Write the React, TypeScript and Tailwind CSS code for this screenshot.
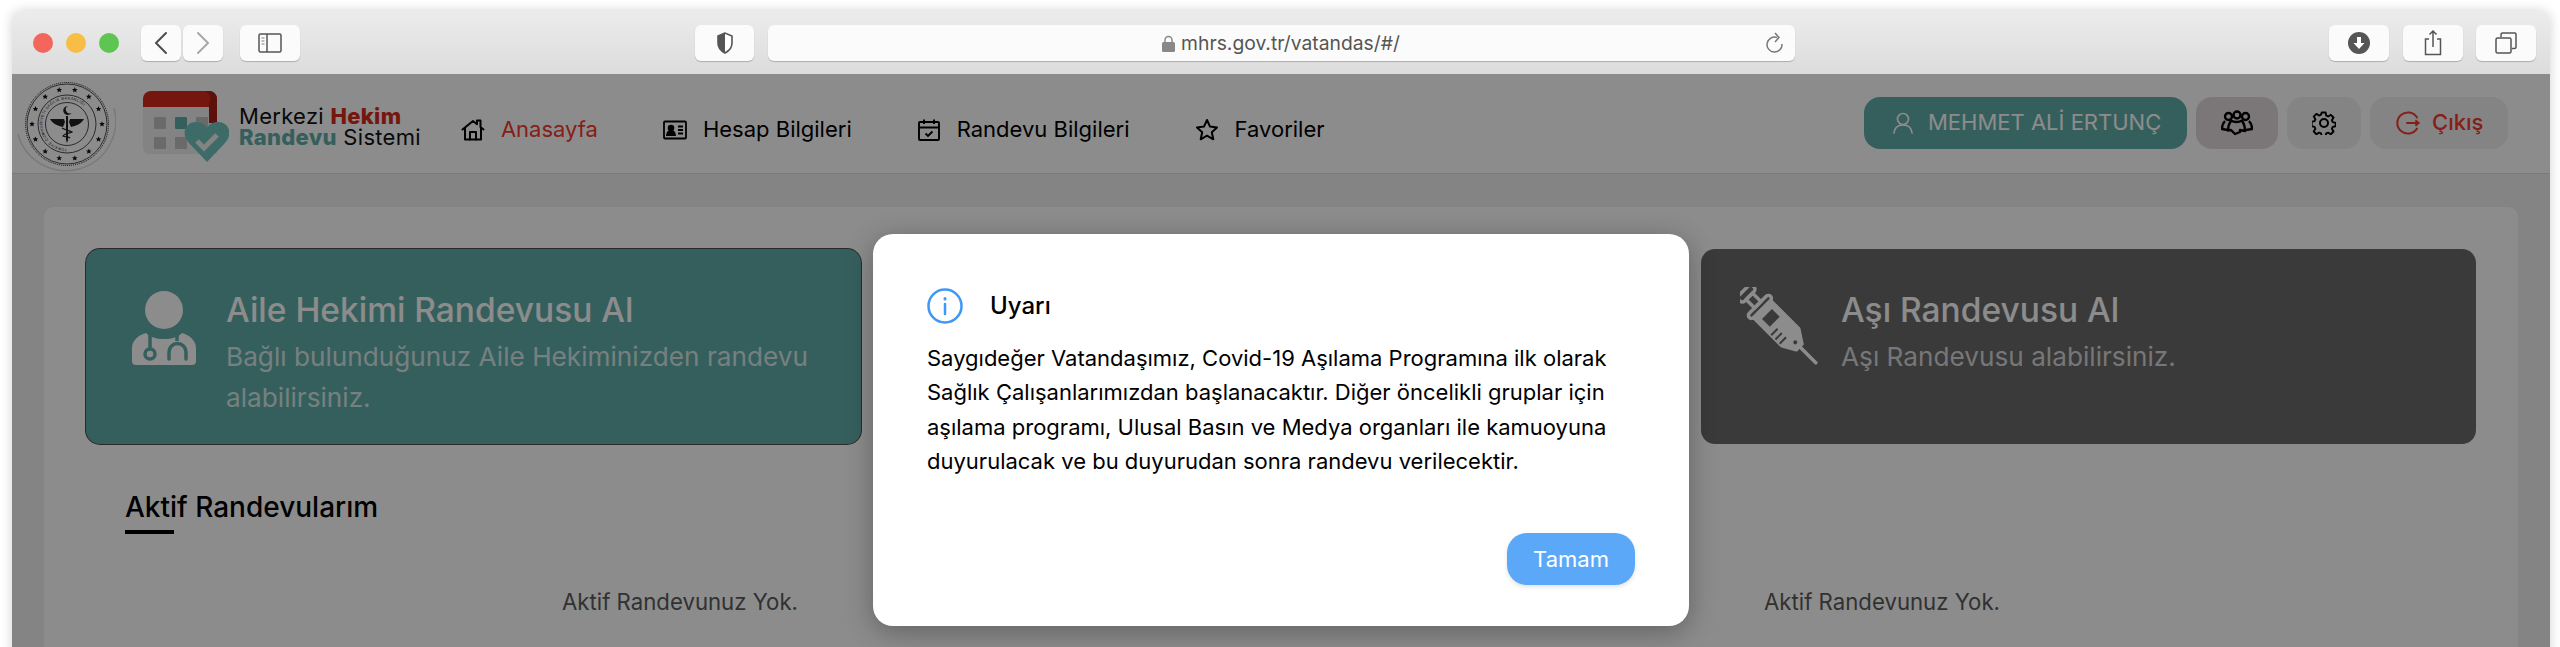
const stars = Array.from({ length: 14 }, (_, i) => {
  const a = (i / 14) * Math.PI * 2;
  return { x: 50 + Math.cos(a) * 35, y: 50 + Math.sin(a) * 35 };
});

function Emblem() {
  return (
    <svg width="100" height="100" viewBox="0 0 100 100" className="mt-[-3px] shrink-0">
      <path d="M2 62a49 49 0 0 0 96-26" fill="none" stroke="#dcdcdc" strokeWidth="1.500" />
      <circle cx="51" cy="52" r="41.500" fill="#fff" stroke="#111" strokeWidth="1" strokeDasharray="1 1" />
      <circle cx="51" cy="52" r="40" fill="none" stroke="#222" strokeWidth="0.800" />
      <g transform="translate(1 2)">
        {stars.map((s, i) => (
          <path
            key={i}
            transform={`translate(${s.x} ${s.y})`}
            d="M0-2.800.8-.9 2.800-.8 1.300.5 1.800 2.500 0 1.400-1.800 2.500-1.300.5-2.800-.8-.8-.9z"
            fill="#111"
          />
        ))}
        <circle cx="50" cy="50" r="29" fill="none" stroke="#222" strokeWidth="0.800" />
        <circle cx="50" cy="50" r="21.500" fill="none" stroke="#222" strokeWidth="0.800" />
        <path id="emblem-ring" d="M50 74.500a24.500 24.500 0 1 1 .01 0" fill="none" />
        <text fontSize="4" fill="#222" fontFamily="Liberation Sans, sans-serif" letterSpacing="0.300">
          <textPath href="#emblem-ring">TÜRKİYE CUMHURİYETİ SAĞLIK BAKANLIĞI</textPath>
        </text>
        <path d="M51 32a4.500 4.500 0 1 0 3.500 7a3.600 3.600 0 1 1-3.500-7z" fill="#222" />
        <path d="M33 45h14l1 3-2 5c-5-1-10-3-13-8zM67 45H53l-1 3 2 5c5-1 10-3 13-8z" fill="#222" />
        <path d="M49 42h2v24l-1 3-1-3z" fill="#222" />
        <path d="M45 54c3 2 7 2 10 4-2 1-7 1-9 4 2 1 6 1 7 2" fill="none" stroke="#222" strokeWidth="1.300" />
      </g>
    </svg>
  );
}

function CalendarLogo() {
  return (
    <svg width="86" height="72" viewBox="0 0 86 72" className="shrink-0">
      <path d="M0 16h74v47H6a6 6 0 0 1-6-6z" fill="#efefef" />
      <path d="M8 0h58a8 8 0 0 1 8 8v8H0V8a8 8 0 0 1 8-8z" fill="#d52a1c" />
      <path d="M62 0h4a8 8 0 0 1 8 8v24h-8V12a8 8 0 0 0-4-12z" fill="#aa2015" />
      <rect x="11" y="26" width="12" height="12" rx="1" fill="#c2c2c2" />
      <rect x="32" y="26" width="12" height="12" rx="1" fill="#62aea9" />
      <rect x="53" y="26" width="12" height="12" rx="1" fill="#c2c2c2" />
      <rect x="11" y="46" width="12" height="12" rx="1" fill="#c2c2c2" />
      <rect x="32" y="46" width="12" height="12" rx="1" fill="#c2c2c2" />
      <path d="M64 71 46 52c-9-10-3-21 7-21 5 0 9 2 11 6 2-4 6-6 11-6 10 0 16 11 7 21z" fill="#6fc4be" />
      <path d="m54 50 7 7 13-13" fill="none" stroke="#efefef" strokeWidth="5" />
    </svg>
  );
}

function HomeIcon() {
  return (
    <svg width="24" height="24" viewBox="0 0 24 24" fill="none" stroke="#000" strokeWidth="2" strokeLinejoin="round" strokeLinecap="round">
      <path d="M1.500 11.500 12 3l4 3.200V2.500h3.500v6.600l3 2.400" />
      <path d="M4 10v11.500h16V10" />
      <path d="M9 21.500V14h6v7.500" />
    </svg>
  );
}

function IdCardIcon() {
  return (
    <svg width="24" height="20" viewBox="0 0 24 20" fill="none" stroke="#000" strokeWidth="1.800">
      <rect x="1" y="1.500" width="22" height="17" rx="1" />
      <circle cx="8" cy="8" r="2.400" fill="#000" />
      <path d="M4 15c.4-3 2-4 4-4s3.600 1 4 4z" fill="#000" />
      <path d="M15 6.500h5M15 10h5M15 13.500h5" />
    </svg>
  );
}

function CalendarCheckIcon() {
  return (
    <svg width="24" height="24" viewBox="0 0 24 24" fill="none" stroke="#000" strokeWidth="1.900">
      <rect x="2" y="4" width="20" height="18" rx="1" />
      <path d="M2 9.500h20M7 1.500V6M17 1.500V6" />
      <path d="m8.500 15.500 2.500 2.500 4.500-4.500" />
    </svg>
  );
}

function StarIcon() {
  return (
    <svg width="24" height="24" viewBox="0 0 24 24" fill="none" stroke="#000" strokeWidth="2" strokeLinejoin="round">
      <path d="m12 2 3 6.600 7 .8-5.200 4.800 1.500 7.100-6.300-3.600-6.300 3.600 1.500-7.100L2 9.400l7-.8z" />
    </svg>
  );
}

function UserIcon() {
  return (
    <svg width="22" height="22" viewBox="0 0 22 22" fill="none" stroke="#fff" strokeWidth="1.700" strokeLinecap="round">
      <circle cx="11" cy="7" r="5.500" />
      <path d="M2 21c.5-5 3.500-8 9-8s8.500 3 9 8" />
    </svg>
  );
}

function GroupIcon() {
  return (
    <svg width="32" height="26" viewBox="0 0 32 26" fill="none" stroke="#000" strokeWidth="2.400" strokeLinejoin="round">
      <circle cx="7.500" cy="6.500" r="3.500" />
      <circle cx="16" cy="5" r="3.500" />
      <circle cx="24.500" cy="6.500" r="3.500" />
      <path d="M4 11c-2 2-3 5-3 8l6 1M28 11c2 2 3 5 3 8l-6 1" />
      <path d="M10 10.500c-2 3-3 6-3 10l3-.5 4 4 5-2v-2l5 1c0-4-1-7.500-3-10.500-3 2-8 2-11 0z" />
    </svg>
  );
}

function GearIcon() {
  return (
    <svg width="24" height="24" viewBox="0 0 24 24" fill="none" stroke="#000" strokeWidth="2" strokeLinejoin="round">
      <path d="M10 1.500h4l.7 3.200 2 .9 2.800-1.700 2.800 2.800-1.700 2.800.9 2 3 .7v3.600l-3 .7-.9 2 1.700 2.800-2.800 2.800-2.800-1.700-2 .9-.7 2.900h-4l-.7-2.900-2-.9-2.800 1.700-2.800-2.800 1.700-2.800-.9-2-3-.7V11.200l3-.7.9-2-1.700-2.800 2.800-2.800 2.800 1.700 2-.9z" transform="translate(0.100 0.100) scale(0.96)" />
      <circle cx="12" cy="12" r="4" />
    </svg>
  );
}

function ExitIcon() {
  return (
    <svg width="24" height="24" viewBox="0 0 24 24" fill="none" stroke="#f5392c" strokeWidth="2" strokeLinecap="round">
      <path d="M21 6.500A10.600 10.600 0 1 0 21 17.500" />
      <path d="M11 12h11.500" />
      <path d="m20 9.800 2.500 2.200-2.500 2.200" />
    </svg>
  );
}

function DoctorIcon() {
  return (
    <svg width="64" height="76" viewBox="0 0 64 76" className="mt-[1px]">
      <circle cx="32" cy="19" r="19" fill="#fff" />
      <path d="M14 42c-8 2-14 8-14 15v13a4 4 0 0 0 4 4h56a4 4 0 0 0 4-4V57c0-7-6-13-14-15-4 4-10 6-18 6s-14-2-18-6z" fill="#fff" />
      <path d="M18 42v17M45 42v8" stroke="#61ada9" strokeWidth="3.500" />
      <circle cx="18" cy="63" r="5" fill="none" stroke="#61ada9" strokeWidth="3.500" />
      <path d="M37 68v-7a8.500 8.500 0 0 1 17 0v7" fill="none" stroke="#61ada9" strokeWidth="3.500" strokeLinecap="round" />
    </svg>
  );
}

function SyringeIcon() {
  return (
    <svg width="78" height="78" viewBox="0 0 78 78" fill="none" stroke="#fff" strokeWidth="3.500" strokeLinejoin="round" strokeLinecap="round" className="-mt-[3px]">
      <g transform="translate(39 39) rotate(45)">
        <rect x="-50" y="-10" width="8" height="20" rx="3.500" />
        <rect x="-42" y="-4.500" width="12" height="9" />
        <rect x="-30" y="-15" width="6" height="30" rx="3" />
        <path d="M-23-12H16l13 8.500v8L16 12H-23z" fill="#fff" />
        <rect x="-17" y="-7" width="11" height="14" fill="#6a6a6a" stroke="none" />
        <path d="M1 3v9M7 3v9M13 3v9" stroke="#6a6a6a" strokeWidth="2" strokeLinecap="butt" />
        <circle cx="23" cy="0" r="2" fill="#6a6a6a" stroke="none" />
        <path d="M29 0h23" />
      </g>
    </svg>
  );
}

function ChromeButton({ className, children }: { className: string; children: React.ReactNode }) {
  return (
    <div className={`flex h-[36px] shrink-0 items-center justify-center rounded-[6px] bg-[#fbfbfb] shadow-[0_1px_1px_rgba(0,0,0,0.22)] ${className}`}>
      {children}
    </div>
  );
}

function Chrome() {
  return (
    <div className="flex h-[63px] shrink-0 items-center bg-gradient-to-b from-[#ececec] to-[#dcdcdc] pl-[21px] pr-[14px] pt-[1px]">
      <div className="flex gap-[13px]">
        <span className="h-[20px] w-[20px] rounded-full bg-[#f2665c]" />
        <span className="h-[20px] w-[20px] rounded-full bg-[#f8bd45]" />
        <span className="h-[20px] w-[20px] rounded-full bg-[#5ec452]" />
      </div>
      <ChromeButton className="ml-[22px] w-[40px]">
        <svg width="14" height="24" viewBox="0 0 14 24" fill="none" stroke="#4d4d4d" strokeWidth="2" strokeLinecap="round" strokeLinejoin="round">
          <path d="M12 2 2 12l10 10" />
        </svg>
      </ChromeButton>
      <ChromeButton className="ml-[2px] w-[40px]">
        <svg width="14" height="24" viewBox="0 0 14 24" fill="none" stroke="#a8a8a8" strokeWidth="2" strokeLinecap="round" strokeLinejoin="round">
          <path d="m2 2 10 10L2 22" />
        </svg>
      </ChromeButton>
      <ChromeButton className="ml-[17px] w-[60px]">
        <svg width="24" height="20" viewBox="0 0 24 20" fill="none" stroke="#555" strokeWidth="1.500">
          <rect x="1" y="1" width="22" height="18" rx="1.500" />
          <path d="M9 1v18" />
          <path d="M3.500 5h3M3.500 8h3M3.500 11h3" stroke="#aaa" />
        </svg>
      </ChromeButton>
      <ChromeButton className="ml-[395px] w-[59px]">
        <svg width="18" height="22" viewBox="0 0 18 22">
          <path d="M9 1 2 4v7c0 5 3 8 7 10 4-2 7-5 7-10V4z" fill="#fff" stroke="#555" strokeWidth="1.600" />
          <path d="M9 1 2 4v7c0 5 3 8 7 10z" fill="#555" />
        </svg>
      </ChromeButton>
      <ChromeButton className="relative ml-[14px] w-[1027px] pr-[14px]">
        <div className="flex items-center gap-[6px] pl-[13px] font-['Inter',sans-serif] text-[19.300px] text-[#555]">
          <svg width="13" height="17" viewBox="0 0 13 17">
            <path d="M3 8V5a3.500 3.500 0 0 1 7 0v3" fill="none" stroke="#888" strokeWidth="1.500" />
            <rect x="0" y="7" width="13" height="10" rx="1.500" fill="#888" />
          </svg>
          mhrs.gov.tr/vatandas/#/
        </div>
        <svg className="absolute right-[11px] top-[7px]" width="18" height="22" viewBox="0 0 18 22" fill="none" stroke="#777" strokeWidth="1.500">
          <path d="M11 5.500A7.500 7.500 0 1 0 16 12" />
          <path d="m9 1 4 4.500L9 10" />
        </svg>
      </ChromeButton>
      <ChromeButton className="ml-auto w-[60px]">
        <svg width="22" height="22" viewBox="0 0 22 22">
          <circle cx="11" cy="11" r="11" fill="#555" />
          <path d="M9 5h4v6h3.500L11 17l-5.500-6H9z" fill="#fff" />
        </svg>
      </ChromeButton>
      <ChromeButton className="ml-[14px] w-[60px]">
        <svg width="18" height="26" viewBox="0 0 18 26" fill="none" stroke="#555" strokeWidth="1.500">
          <path d="M5 9H1.500v15.500h15V9H13" />
          <path d="M9 1v16M5.500 4.500 9 1l3.500 3.500" />
        </svg>
      </ChromeButton>
      <ChromeButton className="ml-[13px] w-[60px]">
        <svg width="22" height="22" viewBox="0 0 22 22" fill="none" stroke="#555" strokeWidth="1.500">
          <rect x="1" y="6" width="15" height="15" rx="1.500" />
          <path d="M6 5V2.500A1.500 1.500 0 0 1 7.500 1H20a1.500 1.500 0 0 1 1 1.500V15a1.500 1.500 0 0 1-1.500 1.500H17" />
        </svg>
      </ChromeButton>
    </div>
  );
}

function NavItem({ icon, label, active }: { icon: React.ReactNode; label: string; active?: boolean }) {
  return (
    <div className="flex items-center gap-[16px]">
      <span className="flex h-[24px] w-[24px] items-center justify-center">{icon}</span>
      <span className={active ? "text-[#f5392c]" : "text-black"}>{label}</span>
    </div>
  );
}

function Header() {
  return (
    <header className="flex h-[100px] shrink-0 items-center border-b-[1.500px] border-[#dcdcdc] bg-white pl-[4px] pr-[42px]">
      <Emblem />
      <div className="ml-[27px] mt-[7px] flex items-center">
        <CalendarLogo />
        <div className="ml-[10px] mt-[-1px] flex flex-col font-['Inter',sans-serif] text-[22px] leading-[21px] tracking-[0.3px]">
          <span className="text-[#111]">
            Merkezi <b className="font-extrabold text-[#d52a1c]">Hekim</b>
          </span>
          <span className="text-[#111]">
            <b className="font-extrabold text-[#62aea9]">Randevu</b> Sistemi
          </span>
        </div>
      </div>
      <nav className="ml-[40px] mt-[12px] flex items-center gap-[65px] font-['Inter',sans-serif] text-[22px]">
        <NavItem icon={<HomeIcon />} label="Anasayfa" active />
        <NavItem icon={<IdCardIcon />} label="Hesap Bilgileri" />
        <NavItem icon={<CalendarCheckIcon />} label="Randevu Bilgileri" />
        <NavItem icon={<StarIcon />} label="Favoriler" />
      </nav>
      <div className="ml-auto mt-[-2px] flex h-[52px] items-stretch gap-[9px] font-['Inter',sans-serif] text-[22px]">
        <div className="flex w-[323px] items-center gap-[14px] rounded-[16px] bg-[#62aea9] pl-[28px] text-white">
          <UserIcon />
          MEHMET ALİ ERTUNÇ
        </div>
        <div className="flex w-[82px] items-center justify-center rounded-[16px] bg-[#e0d9da]">
          <GroupIcon />
        </div>
        <div className="flex w-[74px] items-center justify-center rounded-[16px] bg-[#f0f0f0]">
          <GearIcon />
        </div>
        <div className="flex w-[138px] items-center gap-[12px] rounded-[16px] bg-[#f0f0f0] pl-[26px] font-medium text-[#f5392c]">
          <ExitIcon />
          Çıkış
        </div>
      </div>
    </header>
  );
}

function ActionCard({
  className,
  icon,
  title,
  text,
}: {
  className: string;
  icon: React.ReactNode;
  title: string;
  text: React.ReactNode;
}) {
  return (
    <div className={`flex h-[195px] items-start rounded-[14px] pt-[41px] text-white ${className}`}>
      <div className="flex w-[140px] shrink-0 justify-center pl-[16px]">{icon}</div>
      <div>
        <div className="text-[33.500px] font-medium leading-[40px]">{title}</div>
        <div className="mt-[6px] text-[26.200px] leading-[41px] text-white/75">{text}</div>
      </div>
    </div>
  );
}

function Content() {
  return (
    <main className="flex-1 bg-[#f0f0f0] px-[32px] pt-[33px] font-['Inter',sans-serif]">
      <div className="h-[500px] rounded-[10px] bg-white px-[42px] pt-[42px]">
        <div className="grid grid-cols-3 gap-[32.500px]">
          <ActionCard
            className="bg-[#62aea9] ring-1 ring-[#4d4d4d]"
            icon={<DoctorIcon />}
            title="Aile Hekimi Randevusu Al"
            text="Bağlı bulunduğunuz Aile Hekiminizden randevu alabilirsiniz."
          />
          <div />
          <ActionCard
            className="bg-[#6a6a6a]"
            icon={<SyringeIcon />}
            title="Aşı Randevusu Al"
            text="Aşı Randevusu alabilirsiniz."
          />
        </div>
        <div className="ml-[39px] mt-[47px] text-[28px] font-medium leading-[32px] text-black">Aktif Randevularım</div>
        <div className="ml-[39px] mt-[7px] h-[4px] w-[49px] bg-black" />
        <div className="mx-[39px] mt-[53px] grid grid-cols-2 gap-[92px] text-center text-[22.200px] leading-[30px] text-[#5a5a5a]">
          <div>Aktif Randevunuz Yok.</div>
          <div>Aktif Randevunuz Yok.</div>
        </div>
      </div>
    </main>
  );
}

function WarningDialog() {
  return (
    <div className="absolute inset-x-0 bottom-0 top-[63px] flex justify-center bg-black/45 pt-[160px]">
      <div className="h-[392px] w-[816px] rounded-[20px] bg-white px-[54px] pt-[54px] font-['Inter',sans-serif] text-black shadow-[0_6px_28px_rgba(0,0,0,0.3)]">
        <div className="flex items-center gap-[27px]">
          <svg width="36" height="36" viewBox="0 0 36 36" fill="none" stroke="#3f97f6" strokeWidth="2.500" strokeLinecap="round">
            <circle cx="18" cy="18" r="16.500" />
            <path d="M18 16v10" />
            <path d="M18 10.500v.6" strokeWidth="3" />
          </svg>
          <span className="text-[24px] font-medium">Uyarı</span>
        </div>
        <p className="mt-[17px] text-[22px] leading-[34.300px]">
          Saygıdeğer Vatandaşımız, Covid-19 Aşılama Programına ilk olarak
          <br />
          Sağlık Çalışanlarımızdan başlanacaktır. Diğer öncelikli gruplar için
          <br />
          aşılama programı, Ulusal Basın ve Medya organları ile kamuoyuna
          <br />
          duyurulacak ve bu duyurudan sonra randevu verilecektir.
        </p>
        <div className="mt-[55px] flex justify-end">
          <button className="h-[52px] w-[128px] rounded-[20px] bg-[#5ca8f8] text-[22px] text-white shadow-[0_2px_4px_rgba(0,0,0,0.12)]">
            Tamam
          </button>
        </div>
      </div>
    </div>
  );
}

export default function App() {
  return (
    <div className="h-[647px] overflow-hidden bg-white pl-[12px] pr-[10px] pt-[11px]">
      <div className="relative flex h-[660px] flex-col overflow-hidden rounded-t-[10px] shadow-[0_0_12px_rgba(0,0,0,0.18)]">
        <Chrome />
        <Header />
        <Content />
        <WarningDialog />
      </div>
    </div>
  );
}
